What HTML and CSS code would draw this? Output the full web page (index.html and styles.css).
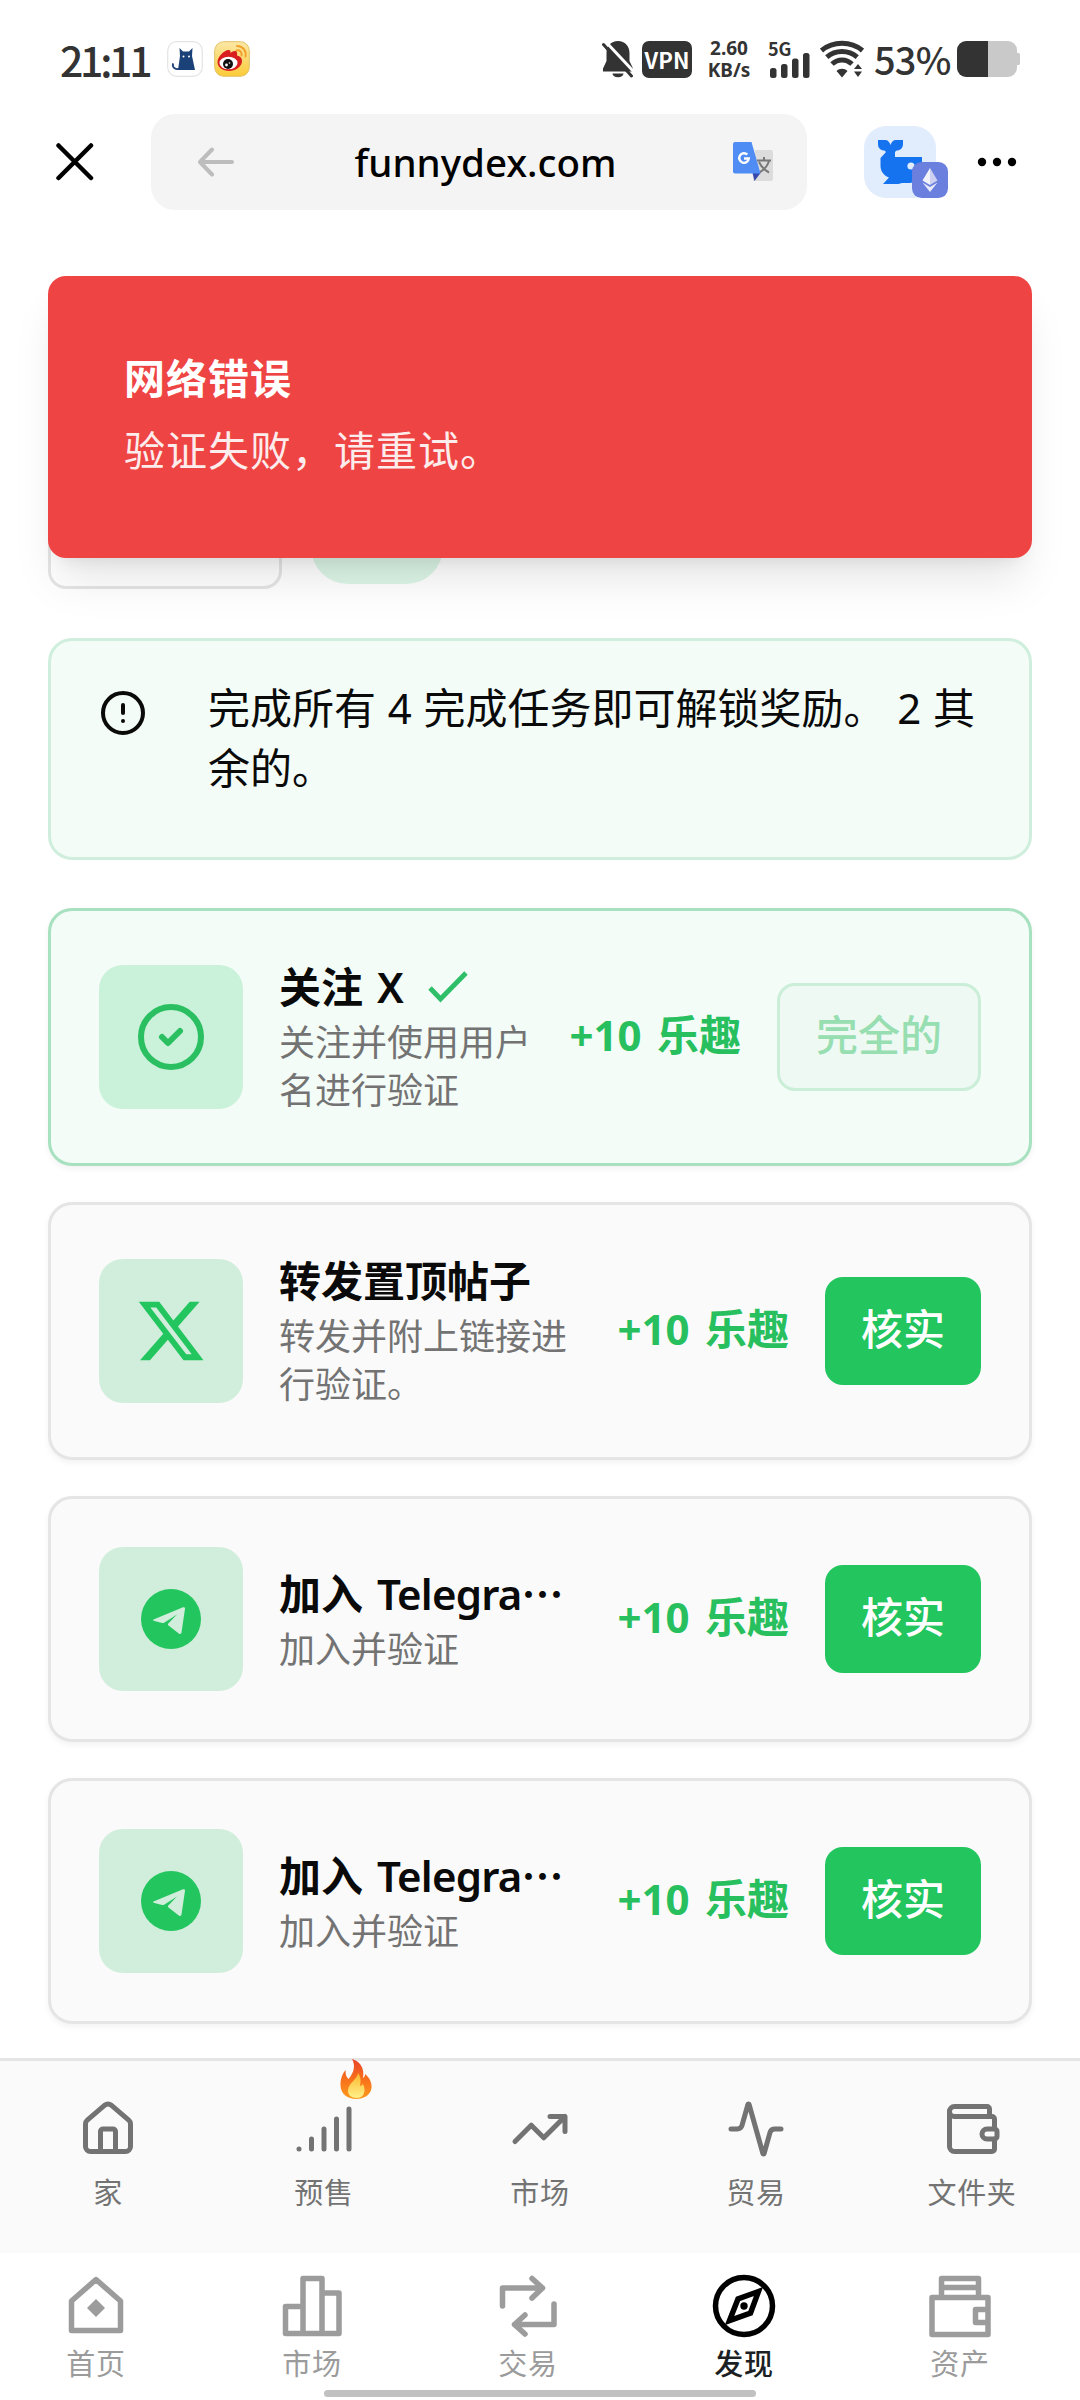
FILE: index.html
```html
<!DOCTYPE html>
<html lang="zh-CN">
<head>
<meta charset="utf-8">
<title>funnydex.com</title>
<link rel="stylesheet" href="styles.css">
</head>
<body>
<header class="status">
  <span class="clock">21:11</span>
  <svg class="app-cat" width="36" height="36" viewBox="0 0 36 36"><rect x=".7" y=".7" width="34.6" height="34.6" rx="9" fill="#fff" stroke="#e4e4e4" stroke-width="1.2"/><path d="M11 29 13 15 12.500 7 16 10.500h6L25.500 7 25 15l3 14z" fill="#1b4179"/><path d="M13 27.500c-4 1.500-8-.5-7-4.500" fill="none" stroke="#1b4179" stroke-width="1.800" stroke-linecap="round"/><circle cx="16.500" cy="15.500" r="1" fill="#fff"/><circle cx="22" cy="15.500" r="1" fill="#fff"/></svg>
  <svg class="app-weibo" width="36" height="36" viewBox="0 0 36 36"><defs><linearGradient id="wb" x1="0" y1="0" x2="0" y2="1"><stop offset="0" stop-color="#fbe8a6"/><stop offset="1" stop-color="#fbcb38"/></linearGradient></defs><rect x=".7" y=".7" width="34.600" height="34.600" rx="9" fill="url(#wb)" stroke="#e2c268" stroke-width="1"/><path d="M3.500 21c0-5 7-12.500 11.500-12 2 .3 1.500 2 1.500 3 2-2 6-3 6.500-.5.4 1.500 0 3 0 3 3 .5 5 2.500 5 5.500 0 6-7 10-13 10S3.500 26.500 3.500 21z" fill="#d81e1e"/><ellipse cx="14.500" cy="22" rx="9" ry="6.300" fill="#fff"/><circle cx="14" cy="23" r="5" fill="#111"/><circle cx="12.500" cy="24" r="1.400" fill="#fff"/><circle cx="15.500" cy="22" r=".8" fill="#fff"/><path d="M22.500 9.500a4 4 0 0 1 5 5M23 5a8.500 8.500 0 0 1 8.500 10.500" fill="none" stroke="#f2a02c" stroke-width="1.900" stroke-linecap="round"/></svg>
  <span class="spacer"></span>
  <svg class="bell" width="32" height="38" viewBox="0 0 32 38"><path d="M16 1C9 1 4.500 6 4.500 13v8L1 28.500v3h30v-3L27.500 21v-8C27.500 6 23 1 16 1z" fill="#333"/><path d="M10.500 33.500h11a5.500 3.800 0 0 1-11 0z" fill="#333"/><path d="M3.500 1.500 33 33" stroke="#fff" stroke-width="3"/><path d="M1.500 4.500 29.500 36" stroke="#333" stroke-width="3" stroke-linecap="round"/></svg>
  <span class="vpn">VPN</span>
  <span class="speed"><span>2.60</span><span>KB/s</span></span>
  <span class="cell">
    <span class="cell-label">5G</span>
    <svg width="40" height="26" viewBox="0 0 40 26" fill="#333"><rect x="0" y="16" width="6.500" height="10" rx="2.500"/><rect x="11" y="12" width="6.500" height="14" rx="2.500"/><rect x="22" y="6.500" width="6.500" height="19.500" rx="2.500"/><rect x="33" y="1" width="6.500" height="25" rx="2.500"/></svg>
  </span>
  <svg class="wifi" width="44" height="38" viewBox="0 0 44 38"><g fill="none" stroke="#333" stroke-width="5" stroke-linecap="butt"><path d="M1.500 10.500C13 .8 31 .8 42.500 10.500"/><path d="M6.800 17.200C15.500 9.700 28.500 9.700 37.200 17.200"/><path d="M12 24C18 18.500 26 18.500 32 24"/></g><path d="M22 37.500 16.500 31c3-3 8-3 11 0zM34 29l4-5 4 5zM34 31.500h8L38 37z" fill="#333"/></svg>
  <span class="percent">53%</span>
  <svg class="battery" width="63" height="36" viewBox="0 0 63 36"><path d="M9 0h42a9 9 0 0 1 9 9v3h1.500A1.500 1.500 0 0 1 63 13.500v9a1.500 1.500 0 0 1-1.500 1.500H60v3a9 9 0 0 1-9 9H9z" fill="#c9c9c9"/><path d="M31 0H9a9 9 0 0 0-9 9v18a9 9 0 0 0 9 9h22z" fill="#333"/></svg>
</header>

<div class="browser">
  <svg class="close" width="38" height="38" viewBox="0 0 38 38"><path d="M2.500 2.500 35 35M35 2.500 2.500 35" stroke="#000" stroke-width="4.500" stroke-linecap="round"/></svg>
  <div class="url">
    <svg width="36" height="30" viewBox="0 0 36 30"><path d="M34 15H2.500M14 2.500 2 15l12 12.500" fill="none" stroke="#bdbdbd" stroke-width="4" stroke-linecap="round" stroke-linejoin="round"/></svg>
    <span class="host">funnydex.com</span>
    <svg width="40" height="40" viewBox="0 0 40 40"><path d="M22 8h16a2 2 0 0 1 2 2v27a2 2 0 0 1-2 2H20z" fill="#dcdcdc"/><path d="M24 18.500h14M31 15v3.500M36 19c-1.500 5-5 9-10 11.500M26 20c2 4 5 8 10 10.500" fill="none" stroke="#777" stroke-width="2"/><path d="M19.500 31h8l-6 8z" fill="#3949ab"/><path d="M2 0h16.500L27.500 31.500H2a2 2 0 0 1-2-2V2a2 2 0 0 1 2-2z" fill="#4f8df5"/><path d="M14.300 12.500a4.800 4.800 0 1 0 1.500 4h-4.800" fill="none" stroke="#fff" stroke-width="2.400"/></svg>
  </div>
  <div class="wallet">
    <svg width="72" height="72" viewBox="0 0 72 72"><rect width="72" height="72" rx="22" fill="#e1edfc"/><path d="M14 14h7c3 0 4.500 2 5.500 5 1-3 2.500-5 5.500-5h7v4c0 4-2.500 6.500-6.500 6.500L31 26v5h27v14c0 7-6 11-12 12h-8l-3.500 1h-15.500l6-6.500C20 50 16.500 45 16.500 40V32l5.500-6-1.500-1.500C16.500 24.500 14 22 14 18z" fill="#1673f0"/><circle cx="47" cy="40" r="3.600" fill="#e1edfc"/></svg>
    <svg class="chain" width="36" height="36" viewBox="0 0 36 36"><rect width="36" height="36" rx="9.500" fill="#6b7fdf"/><path d="M18 6 10.500 18.500 18 23z" fill="#f3f3fc"/><path d="M18 6l7.500 12.500L18 23z" fill="#cdd0f1"/><path d="M10.500 20.500 18 25l7.500-4.500L18 30z" fill="#e9eafa"/></svg>
  </div>
  <svg class="more" width="40" height="10" viewBox="0 0 40 10"><circle cx="5" cy="5" r="4.200"/><circle cx="20" cy="5" r="4.200"/><circle cx="35" cy="5" r="4.200"/></svg>
</div>

<main class="page">
  <div class="toast"><strong>网络错误</strong><span>验证失败，请重试。</span></div>
  <div class="filters"><span class="filter-box"></span><span class="filter-pill"></span></div>
  <div class="alert">
    <svg width="48" height="48" viewBox="0 0 24 24" fill="none" stroke="#0a0a0a" stroke-width="2" stroke-linecap="round"><circle cx="12" cy="12" r="10"/><path d="M12 8v4M12 16h.01"/></svg>
    <p>完成所有 4 完成任务即可解锁奖励。 2 其<br>余的。</p>
  </div>

  <section class="tasks">
    <article class="task done">
      <div class="tile"><svg width="72" height="72" viewBox="0 0 24 24" fill="none" stroke="#2abf60" stroke-width="2" stroke-linecap="round" stroke-linejoin="round"><circle cx="12" cy="12" r="10"/><path d="m9 12 2 2 4-4"/></svg></div>
      <div class="info">
        <h3><span>关注 X</span><svg width="40" height="32" viewBox="0 0 40 32"><path d="M2 17 12.500 28 38 2" fill="none" stroke="#2fbf68" stroke-width="4.800"/></svg></h3>
        <p>关注并使用用户名进行验证</p>
      </div>
      <span class="reward">+10 乐趣</span>
      <button class="btn ghost">完全的</button>
    </article>
    <article class="task">
      <div class="tile"><svg width="72" height="72" viewBox="0 0 24 24" fill="#22c55e"><path d="M18.244 2.250h3.308l-7.227 8.260 8.502 11.240H16.170l-5.214-6.817L4.990 21.750H1.680l7.730-8.835L1.254 2.250H8.080l4.713 6.231zm-1.161 17.520h1.833L7.084 4.126H5.117z"/></svg></div>
      <div class="info">
        <h3><span>转发置顶帖子</span></h3>
        <p>转发并附上链接进行验证。</p>
      </div>
      <span class="reward">+10 乐趣</span>
      <button class="btn">核实</button>
    </article>
    <article class="task">
      <div class="tile"><svg width="80" height="80" viewBox="0 0 80 80"><circle cx="40" cy="40" r="30" fill="#22c55e"/><path d="M22.500 40.500 52 28.300c1.300-.5 2.200.3 2 1.500L50.500 53.500c-.3 1.600-1.500 1.800-2.700.9L37.500 46.500c-.8-.6-.8-1.200-.2-1.900L46 35.500l-12.500 8c-1.600.9-2.500.7-4.500.1l-6.300-1.800c-.8-.3-.8-1-.2-1.300z" fill="#d0eedb"/></svg></div>
      <div class="info">
        <h3><span>加入 <b>Telegra</b><i>…</i></span></h3>
        <p>加入并验证</p>
      </div>
      <span class="reward">+10 乐趣</span>
      <button class="btn">核实</button>
    </article>
    <article class="task">
      <div class="tile"><svg width="80" height="80" viewBox="0 0 80 80"><circle cx="40" cy="40" r="30" fill="#22c55e"/><path d="M22.500 40.500 52 28.300c1.300-.5 2.200.3 2 1.500L50.500 53.500c-.3 1.600-1.500 1.800-2.700.9L37.500 46.500c-.8-.6-.8-1.200-.2-1.900L46 35.500l-12.500 8c-1.600.9-2.500.7-4.500.1l-6.300-1.800c-.8-.3-.8-1-.2-1.300z" fill="#d0eedb"/></svg></div>
      <div class="info">
        <h3><span>加入 <b>Telegra</b><i>…</i></span></h3>
        <p>加入并验证</p>
      </div>
      <span class="reward">+10 乐趣</span>
      <button class="btn">核实</button>
    </article>
  </section>
</main>

<nav class="site-nav">
  <a><svg viewBox="0 0 24 24"><path d="M15 21v-8a1 1 0 0 0-1-1h-4a1 1 0 0 0-1 1v8"/><path d="M3 10a2 2 0 0 1 .709-1.528l7-5.999a2 2 0 0 1 2.582 0l7 5.999A2 2 0 0 1 21 10v9a2 2 0 0 1-2 2H5a2 2 0 0 1-2-2z"/></svg><span>家</span></a>
  <a><svg viewBox="0 0 24 24"><path d="M2 20h.01M7 20v-4M12 20v-8M17 20V8M22 4v16"/></svg><span>预售</span>
    <svg class="flame" viewBox="0 0 32 40"><defs><linearGradient id="fl" x1="0" y1="0" x2="0" y2="1"><stop offset="0" stop-color="#e8432a"/><stop offset=".5" stop-color="#f8701c"/><stop offset="1" stop-color="#fb9a1d"/></linearGradient><linearGradient id="fi" x1="0" y1="0" x2="0" y2="1"><stop offset="0" stop-color="#fdb62c"/><stop offset="1" stop-color="#fff08a"/></linearGradient></defs><path d="M12 0c7 2 13 8 11 19 2-1 2-3 2-4 5 4 7 9 6.500 14C30.500 36 24 40 16 40S.5 35 .5 26C.5 19 2.500 15 5.500 11c0 4 .5 7 3 9C13.500 14 16 7 12 0z" fill="url(#fl)"/><path d="M18 14c-1 7-9 9-10 17-.5 5 3.500 8 8.500 8s8-3 8-8c0-2-.5-4-1.500-6-1 1-2 2-3 2 1-5 1-9-2-13z" fill="url(#fi)"/></svg></a>
  <a><svg viewBox="0 0 24 24"><path d="M22 7 13.500 15.500 8.500 10.500 2 17M16 7h6v6"/></svg><span>市场</span></a>
  <a><svg viewBox="0 0 24 24"><path d="M22 12h-2.480a2 2 0 0 0-1.930 1.460l-2.350 8.360a.25.25 0 0 1-.48 0L9.240 2.180a.25.25 0 0 0-.48 0l-2.350 8.360A2 2 0 0 1 4.490 12H2"/></svg><span>贸易</span></a>
  <a><svg viewBox="0 0 24 24"><path d="M19 7V4a1 1 0 0 0-1-1H5a2 2 0 0 0 0 4h15a1 1 0 0 1 1 1v4h-3a2 2 0 0 0 0 4h3a1 1 0 0 0 1-1v-2a1 1 0 0 0-1-1"/><path d="M3 5v14a2 2 0 0 0 2 2h15a1 1 0 0 0 1-1v-4"/></svg><span>文件夹</span></a>
</nav>

<nav class="app-nav">
  <a><svg viewBox="0 0 72 72"><path d="M11.500 31 36 9.500 60.500 31V60.500h-49z"/><path d="M36 29l9 9-9 9-9-9z" fill="#9c9c9c" stroke="none"/></svg><span>首页</span></a>
  <a><svg viewBox="0 0 72 72"><path d="M27 36.500H9.500V63.500h53.500V23H46M27 63V8.500h19v55"/></svg><span>市场</span></a>
  <a><svg viewBox="0 0 72 72"><path d="M10.500 36V18h40M40 8.500l10.500 9.500L40 28M62 34v20.500H22.500M33 45 22.500 54.500 33 64" /></svg><span>交易</span></a>
  <a class="active"><svg viewBox="0 0 72 72"><circle cx="36" cy="36" r="28.500"/><path d="M50.500 21.500 30 29 21.500 50.500 42.500 43z" stroke-linejoin="miter"/><circle cx="36" cy="36" r="3.700" fill="#000" stroke="none"/></svg><span>发现</span></a>
  <a><svg viewBox="0 0 72 72"><path d="M8 27.500h56V64.500H8zM17.500 27V8.500h37V27M17.500 17.500h37M64 39.500H51.500v13H64"/></svg><span>资产</span></a>
  <div class="home-bar"></div>
</nav>
</body>
</html>
```
FILE: styles.css
```css
* { box-sizing: border-box; margin: 0; padding: 0; }
body {
  width: 1080px;
  height: 2400px;
  display: flex;
  flex-direction: column;
  background: #fff;
  color: #0a0a0a;
  font-family: "Noto Sans", "Noto Sans CJK SC", sans-serif;
  overflow: hidden;
}
svg { display: block; flex: none; }

/* phone status bar */
.status {
  height: 114px;
  padding: 4px 60px 0 60px;
  display: flex;
  align-items: center;
  color: #333;
  font-weight: 600;
}
.clock { width: 107px; font: 500 41px/60px "Noto Sans CJK SC", sans-serif; letter-spacing: -3.3px; white-space: nowrap; }
.app-weibo { margin-left: 11px; }
.spacer { flex: 1; }
.vpn {
  margin-left: 8px;
  width: 50px;
  height: 37px;
  border-radius: 7px;
  background: #333;
  color: #fff;
  font: 700 22px/37px "Noto Sans CJK SC", sans-serif;
  text-align: center;
}
.speed {
  margin-left: 12px;
  width: 50px;
  display: flex;
  flex-direction: column;
  gap: 3px;
  font: 700 19px/19px "Noto Sans", sans-serif;
  text-align: center;
}
.cell { margin-left: 14px; width: 42px; height: 37px; position: relative; display: flex; flex-direction: column; justify-content: flex-end; padding-left: 2px; }
.cell-label { position: absolute; left: 0; top: -3px; font: 700 18px/20px "Noto Sans CJK SC", sans-serif; }
.wifi { margin-left: 10px; }
.percent { margin-left: 10px; width: 76px; font: 500 38px/60px "Noto Sans CJK SC", sans-serif; letter-spacing: -.8px; white-space: nowrap; }
.battery { margin-left: 7px; }

/* in-app browser toolbar */
.browser { height: 96px; padding: 0 63px 0 56px; display: flex; align-items: center; }
.url {
  margin-left: 57px;
  width: 656px;
  height: 96px;
  padding: 0 34px 0 47px;
  border-radius: 24px;
  background: #f4f4f4;
  display: flex;
  align-items: center;
  justify-content: space-between;
}
.host { padding-left: 4px; font-size: 38.5px; line-height: 54px; font-weight: 500; color: #000; }
.wallet { position: relative; margin-left: 57px; width: 72px; height: 72px; }
.chain { position: absolute; left: 48px; top: 36px; }
.more { margin-left: auto; }

/* page content */
.page { position: relative; height: 1848px; padding: 300px 48px 0; }
.toast {
  position: absolute;
  left: 48px;
  right: 48px;
  top: 66px;
  height: 282px;
  padding: 73px 76px;
  border-radius: 18px;
  background: #ef4444;
  color: #fff;
  display: flex;
  flex-direction: column;
  gap: 12px;
  box-shadow: 0 30px 45px -9px rgba(0, 0, 0, .1), 0 12px 18px -12px rgba(0, 0, 0, .1);
}
.toast strong { font-size: 41px; letter-spacing: 1px; line-height: 59px; font-weight: 700; }
.toast span { font-size: 41px; letter-spacing: 1px; line-height: 61px; opacity: .9; }
.filters { height: 79px; display: flex; gap: 29px; }
.filter-box { width: 234px; border: 3px solid #e5e5e5; border-radius: 18px; }
.filter-pill { width: 132px; height: 74px; border-radius: 37px; background: #dcf6e6; }
.alert {
  margin-top: 49px;
  height: 222px;
  padding: 45px 48px 0;
  border: 3px solid #d0eedd;
  border-radius: 24px;
  background: #f3fcf7;
  display: flex;
  gap: 61px;
}
.alert svg { margin-top: 3px; }
.alert p { font-size: 42px; line-height: 60px; margin-top: -8px; word-spacing: .8px; white-space: nowrap; }

.tasks { margin-top: 48px; display: flex; flex-direction: column; gap: 36px; }
.task {
  padding: 48px;
  border: 3px solid #e5e5e5;
  border-radius: 24px;
  background: #fafafa;
  display: flex;
  align-items: center;
  gap: 36px;
  box-shadow: 0 3px 6px rgba(0, 0, 0, .05);
}
.done { background: #f3fcf7; border-color: #a7e1bf; }
.tile { width: 144px; height: 144px; border-radius: 24px; background: #d0eedb; display: flex; align-items: center; justify-content: center; flex: none; }
.done .tile { background: #caf1da; }
.info { flex: 1; min-width: 0; }
.info h3 { display: flex; align-items: center; gap: 24px; padding-bottom: 4px; font-size: 42px; line-height: 56px; font-weight: 600; white-space: nowrap; word-spacing: 3px; }
.info h3 b { font-weight: 600; letter-spacing: -.8px; }
.info h3 i { font-style: normal; font-family: "Noto Sans CJK SC", sans-serif; }
.info p { font-size: 36px; line-height: 48px; color: #737373; }
.reward { padding-bottom: 4px; font-size: 42px; line-height: 56px; font-weight: 700; color: #28bf5f; white-space: nowrap; word-spacing: 4.5px; }
.btn {
  height: 108px;
  padding: 0 36px 4px;
  border: 0;
  border-radius: 18px;
  background: #22c55e;
  color: #fff;
  font: 500 42px/56px "Noto Sans", "Noto Sans CJK SC", sans-serif;
  white-space: nowrap;
}
.ghost { border: 3px solid #caeed8; background: #eff9f4; color: #97deb1; }

/* bottom navigation of the site */
.site-nav { height: 195px; border-top: 3px solid #e5e5e5; background: #fafafa; display: grid; grid-template-columns: repeat(5, 1fr); }
.site-nav a { position: relative; padding-top: 38px; display: flex; flex-direction: column; align-items: center; color: #737373; }
.site-nav a > svg:first-child { width: 60px; height: 60px; fill: none; stroke: #737373; stroke-width: 2; stroke-linecap: round; stroke-linejoin: round; }
.site-nav span { margin-top: 13px; font-size: 29px; letter-spacing: .7px; line-height: 42px; font-weight: 400; }
.site-nav .flame { position: absolute; left: 124px; top: -2px; width: 32px; height: 40px; }

/* bottom navigation of the wallet app */
.app-nav { position: relative; height: 147px; margin-left: -12px; width: 1080px; display: grid; grid-template-columns: repeat(5, 1fr); }
.app-nav a { padding-top: 17px; display: flex; flex-direction: column; align-items: center; color: #9b9b9b; }
.app-nav svg { width: 72px; height: 72px; fill: none; stroke: #9c9c9c; stroke-width: 5.5; stroke-linecap: round; stroke-linejoin: round; }
.app-nav span { margin-top: 1px; font-size: 29px; letter-spacing: .7px; line-height: 42px; }
.app-nav .active { color: #1c1f24; }
.app-nav .active svg { stroke: #000; }
.app-nav .active span { font-weight: 500; }
.home-bar { position: absolute; left: 336px; top: 137px; width: 432px; height: 7px; border-radius: 4px; background: #c1c1c1; }
```
